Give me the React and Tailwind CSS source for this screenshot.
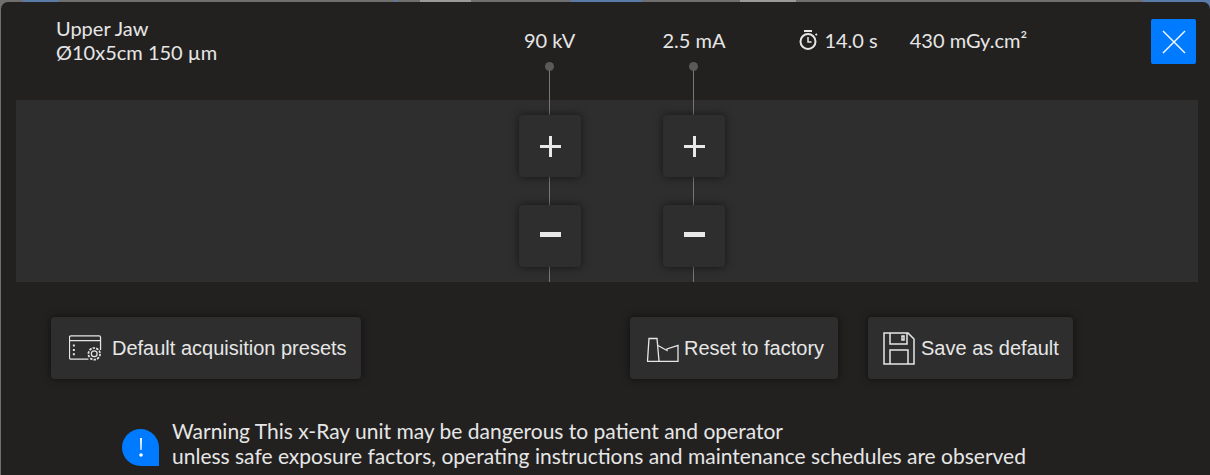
const lato = { fontFamily: '"Lato", "Carlito", sans-serif' };

function Slider({ className }) {
  return (
    <div className={`relative flex w-[62px] flex-col items-center gap-7 pt-[15px] ${className}`}>
      <div className="absolute left-[30px] top-[-34px] bottom-0 w-px bg-[#777777]" />
      <div className="absolute left-[26px] top-[-38px] h-[9px] w-[9px] rounded-full bg-[#5a5a5a]" />
      {["+", "−"].map((s) => (
        <button key={s} className="relative flex h-[62px] w-[62px] items-center justify-center rounded-[4px] bg-[#2e2e2e] shadow-[0_0_8px_rgba(0,0,0,0.55)]">
          {s === "+" ? (
            <span className="relative block h-[21px] w-[21px]">
              <span className="absolute left-0 top-[9px] h-[3px] w-[21px] bg-[#e8e8e8]" />
              <span className="absolute left-[9px] top-0 h-[21px] w-[3px] bg-[#e8e8e8]" />
            </span>
          ) : (
            <span className="mb-1 block h-[5px] w-[21px] bg-[#e8e8e8]" />
          )}
        </button>
      ))}
    </div>
  );
}

function Btn({ children, className }) {
  return (
    <button className={`flex h-[62px] items-center rounded-[4px] bg-[#2e2e2e] text-[20px] text-[#e6e6e6] shadow-[0_0_8px_rgba(0,0,0,0.55)] ${className}`} style={{ fontFamily: '"Liberation Sans", sans-serif' }}>
      {children}
    </button>
  );
}

export default function App() {
  return (
    <div className="h-[475px] w-[1210px] overflow-hidden bg-[linear-gradient(90deg,#6f6f6f_23px,#5a7aa8_23px,#5a7aa8_59px,#6f6f6f_59px,#6f6f6f_394px,#5a7aa8_394px,#5a7aa8_397px,#6f6f6f_397px,#6f6f6f_420px,#9a9a9a_420px,#9a9a9a_471px,#6f6f6f_471px,#6f6f6f_571px,#5a7aa8_571px,#5a7aa8_642px,#6f6f6f_642px,#6f6f6f_740px,#9a9a9a_740px,#9a9a9a_796px,#6f6f6f_796px,#6f6f6f_1143px,#5a7aa8_1143px)] pt-[2px] pl-px">
      <div className="h-[473px] w-[1209px] rounded-tl-[7px] rounded-tr-[7px] bg-[#222120] text-[#e6e6e6]" style={lato}>
        <div className="flex h-[98px] text-[20px] leading-6">
          <div className="ml-[55px] mt-[14px] w-[240px]">
            <div>Upper Jaw</div>
            <div>Ø10x5cm 150 µm</div>
          </div>
          <div className="ml-[228px] mt-[26px]">90 kV</div>
          <div className="ml-[87px] mt-[26px]">2.5 mA</div>
          <div className="ml-[74px] mt-[26px] flex items-start gap-[6px]">
            <svg width="19" height="24" viewBox="0 0 19 24" fill="none" stroke="#e6e6e6" strokeWidth="2">
              <path d="M5 3h8M16.500 7l1.500-1" />
              <circle cx="9" cy="13.500" r="7.500" />
              <path d="M9 9v5h3.500" strokeWidth="1.500" />
            </svg>
            <span>14.0 s</span>
          </div>
          <div className="ml-[32px] mt-[26px]">430 mGy.cm²</div>
          <button className="ml-[124px] mt-[17px] flex h-[45px] w-[45px] items-center justify-center rounded-[2px] bg-[#007bff]">
            <svg width="24" height="24" viewBox="0 0 24 24" fill="none" stroke="#ffffff" strokeWidth="1.4">
              <path d="M1 1l22 22M23 1L1 23" />
            </svg>
          </button>
        </div>
        <div className="ml-[15px] flex h-[182px] w-[1182px] bg-[#2e2e2e]">
          <Slider className="ml-[503px]" />
          <Slider className="ml-[82px]" />
        </div>
        <div className="mt-[35px] flex">
          <Btn className="ml-[50px] w-[310px]">
            <svg className="ml-[18px] mr-[10px]" width="33" height="26" viewBox="0 0 34 26" fill="none" stroke="#e6e6e6" strokeWidth="1.3">
              <path d="M20 24.500H2a1.500 1.500 0 0 1-1.500-1.500V2A1.500 1.500 0 0 1 2 .5h29A1.500 1.500 0 0 1 32.500 2v13M.5 5.500h32" />
              <path d="M5 9.500v2M5 14v2M5 18.500v2" strokeWidth="2" />
              <circle cx="26" cy="19" r="3" />
              <circle cx="26" cy="19" r="6" strokeDasharray="2.500 1.200" strokeWidth="1.800" />
            </svg>
            Default acquisition presets
          </Btn>
          <Btn className="ml-[269px] w-[208px]">
            <svg className="ml-[16px] mr-[5px]" width="33" height="27" viewBox="0 0 33 27" fill="none" stroke="#e6e6e6" strokeWidth="1.3">
              <path d="M1.500 26 3 3.500h8l2 22.500" />
              <path d="M12 10.500l9 5V14l11-3.500V26.500H1" />
            </svg>
            Reset to factory
          </Btn>
          <Btn className="ml-[30px] w-[205px]">
            <svg className="ml-[15px] mr-[6px]" width="32" height="33" viewBox="0 0 32 33" fill="none" stroke="#e6e6e6" strokeWidth="1.5">
              <path d="M1 1h24l6 6v25H1z" />
              <path d="M7 1v11h17V1M7 32V18h18v14" />
              <path d="M19 4v4h2V4z" />
            </svg>
            Save as default
          </Btn>
        </div>
        <div className="mt-[39px] ml-[121px] flex items-start gap-[13px] text-[21px] leading-[25px]">
          <div className="mt-[11px] flex h-[37px] w-[37px] shrink-0 items-center justify-center rounded-full rounded-br-none bg-[#007bff]">
            <svg width="6" height="22" viewBox="0 0 6 22" fill="#ffffff">
              <path d="M2 1h2l-.4 12h-1.200z" />
              <circle cx="3" cy="18" r="1.800" />
            </svg>
          </div>
          <div className="whitespace-nowrap">
            <div>Warning This x-Ray unit may be dangerous to patient and operator</div>
            <div>unless safe exposure factors, operating instructions and maintenance schedules are observed</div>
          </div>
        </div>
      </div>
    </div>
  );
}
